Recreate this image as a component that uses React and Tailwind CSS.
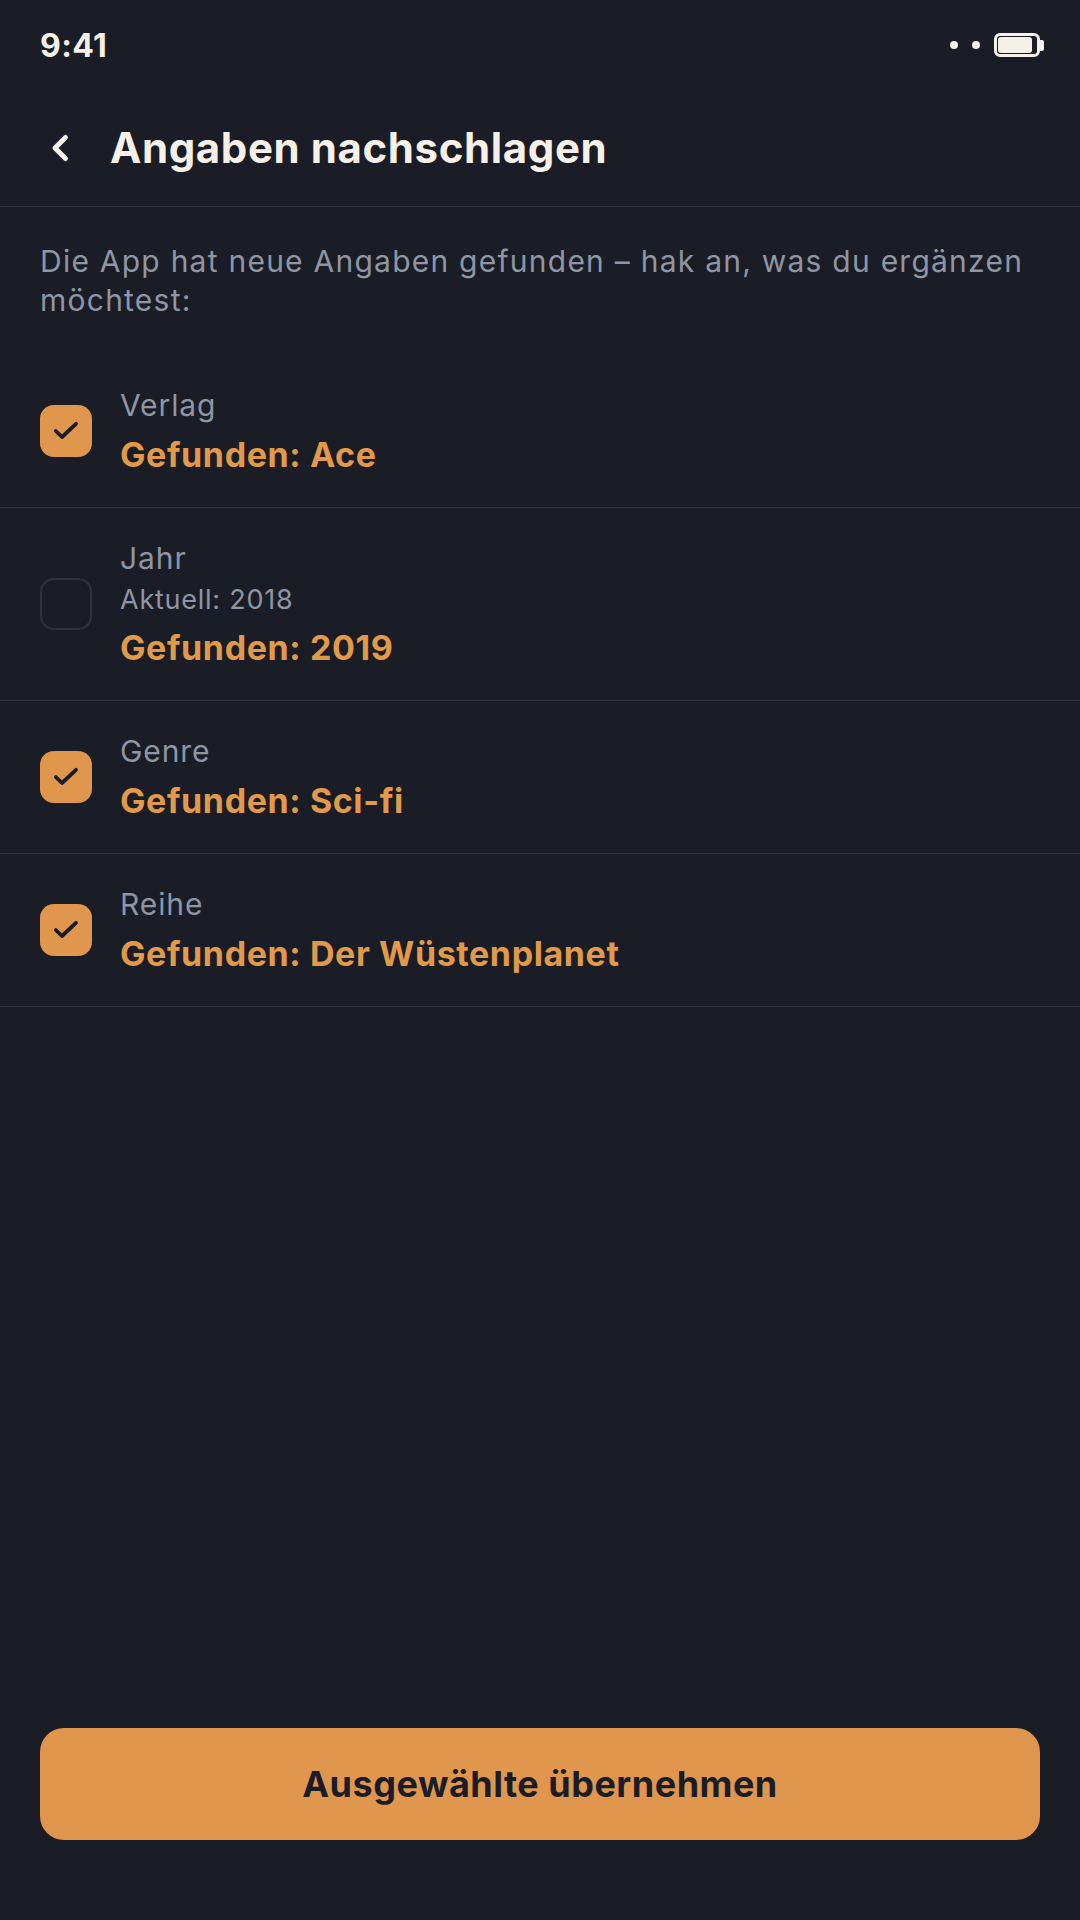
import React from "react";

const rows = [
  { label: "Verlag", found: "Gefunden: Ace", checked: true },
  { label: "Jahr", current: "Aktuell: 2018", found: "Gefunden: 2019", checked: false },
  { label: "Genre", found: "Gefunden: Sci-fi", checked: true },
  { label: "Reihe", found: "Gefunden: Der Wüstenplanet", checked: true },
];

function Box({ checked }) {
  if (!checked)
    return <div className="w-[52px] h-[52px] shrink-0 rounded-[14px] border-2 border-[#2e323c]" />;
  return (
    <div className="w-[52px] h-[52px] shrink-0 rounded-[14px] bg-[#e0964d] flex items-center justify-center">
      <svg width="28" height="24" viewBox="0 0 28 24" fill="none" stroke="#1a1d25" strokeWidth="3.8" strokeLinecap="round" strokeLinejoin="round">
        <path d="M3.8 12L10 18L24 4.8" />
      </svg>
    </div>
  );
}

export default function App() {
  return (
    <div className="h-screen bg-[#1a1d25] flex flex-col font-['Inter',sans-serif]">
      <div className="h-[90px] px-[40px] flex items-center justify-between shrink-0">
        <span className="text-[32px] font-bold text-[#f5f0e8] tracking-[0.4px] pt-[2px]">9:41</span>
        <div className="flex items-center">
          <div className="w-[8px] h-[8px] rounded-full bg-[#f5f0e8] mr-[14px]" />
          <div className="w-[8px] h-[8px] rounded-full bg-[#f5f0e8] mr-[14px]" />
          <div className="w-[46px] h-[24px] rounded-[6px] border-[3px] border-[#f5f0e8] p-[1px]">
            <div className="h-full w-[34px] rounded-[3px] bg-[#f5f0e8]" />
          </div>
          <div className="w-[4px] h-[11px] rounded-r-[2px] bg-[#f5f0e8] mr-[-4px]" />
        </div>
      </div>
      <div className="h-[117px] px-[40px] flex items-center gap-[30px] border-b border-[#2e323c] shrink-0">
        <svg width="40" height="30" viewBox="0 0 40 30" fill="none" stroke="#f5f0e8" strokeWidth="5" strokeLinecap="round" strokeLinejoin="round">
          <path d="M25.5 4.5L15 15l10.5 10.5" />
        </svg>
        <h1 className="text-[42px] leading-[52px] font-bold text-[#f5f0e8] tracking-[0.6px]">Angaben nachschlagen</h1>
      </div>
      <p className="px-[40px] pt-[35px] pb-[35px] text-[30px] leading-[39px] tracking-[1.24px] text-[#8e96a6]">
        Die App hat neue Angaben gefunden – hak an, was du ergänzen möchtest:
      </p>
      <div className="flex-1">
        {rows.map((r) => (
          <div key={r.label} className="flex items-center gap-[28px] px-[40px] py-[27px] border-b border-[#2e323c]">
            <Box checked={r.checked} />
            <div className="flex flex-col">
              <span className="text-[30px] leading-[47px] tracking-[0.9px] text-[#8e96a6]">{r.label}</span>
              {r.current && <span className="text-[27px] leading-[36px] mb-[4px] tracking-[0.75px] text-[#8e96a6]">{r.current}</span>}
              <span className="text-[34px] leading-[51px] font-bold tracking-[0.6px] text-[#e09a4a]">{r.found}</span>
            </div>
          </div>
        ))}
      </div>
      <div className="px-[40px] pb-[80px] shrink-0">
        <div className="h-[112px] rounded-[24px] bg-[#e0964d] flex items-center justify-center text-[36px] font-bold tracking-[0.5px] text-[#1a1d25]">
          Ausgewählte übernehmen
        </div>
      </div>
    </div>
  );
}
